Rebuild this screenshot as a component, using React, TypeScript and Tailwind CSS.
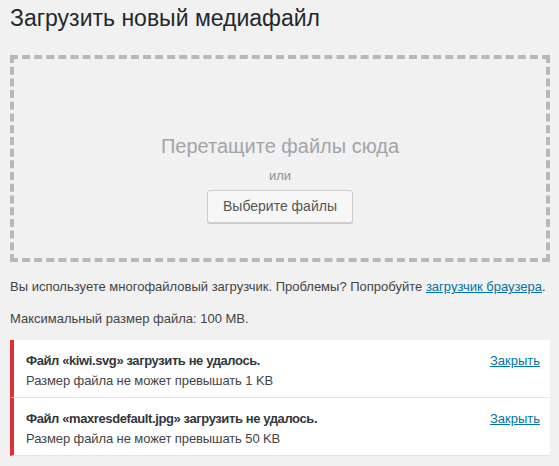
import React from 'react'

type Notice = { file: string; limit: string }

const notices: Notice[] = [
  { file: 'kiwi.svg', limit: '1 KB' },
  { file: 'maxresdefault.jpg', limit: '50 KB' },
]

export default function App() {
  return (
    <div className="min-h-[466px] w-[559px] bg-[#f1f1f1] px-[10px] text-[13px] text-[#444] [font-family:'Liberation_Sans',Arial,sans-serif]">
      <h1 className="pt-[4px] text-[23px] leading-[29px] text-[#23282d]">Загрузить новый медиафайл</h1>

      {/* drop zone */}
      <div className="mt-[22px] flex h-[207px] w-[540px] flex-col items-center border-4 border-dashed border-[#b4b9be] pt-[74px]">
        <p className="text-[20px] leading-[26px] text-[#a0a5aa]">Перетащите файлы сюда</p>
        <p className="mt-[8px] text-[13px] leading-[18px] text-[#8c8f94]">или</p>
        <button className="mt-[5px] h-[33px] rounded-[3px] border border-[#ccc] bg-[#f7f7f7] px-[15px] text-[14px] text-[#555] shadow-[0_1px_0_#ccc]">
          Выберите файлы
        </button>
      </div>

      <p className="mt-[15px] whitespace-nowrap leading-[20px]">
        Вы используете многофайловый загрузчик. Проблемы? Попробуйте{' '}
        <a href="#" className="text-[#0073aa] underline">загрузчик браузера</a>.
      </p>
      <p className="mt-[12px] leading-[20px]">Максимальный размер файла: 100 MB.</p>

      <div className="mt-[11px] w-[540px]">
        {notices.map((n) => (
          <div key={n.file} className="flex items-start justify-between border-b border-l-4 border-b-[#e5e5e5] border-l-[#dc3232] bg-white pb-[6px] pl-[12px] pr-[10px] pt-[11px]">
            <div className="leading-[20px]">
              <p className="font-bold tracking-[-0.4px] text-[#32373c]">Файл «{n.file}» загрузить не удалось.</p>
              <p className="tracking-[-0.1px]">Размер файла не может превышать {n.limit}</p>
            </div>
            <a href="#" className="leading-[20px] text-[#0073aa] underline">Закрыть</a>
          </div>
        ))}
      </div>
    </div>
  )
}
